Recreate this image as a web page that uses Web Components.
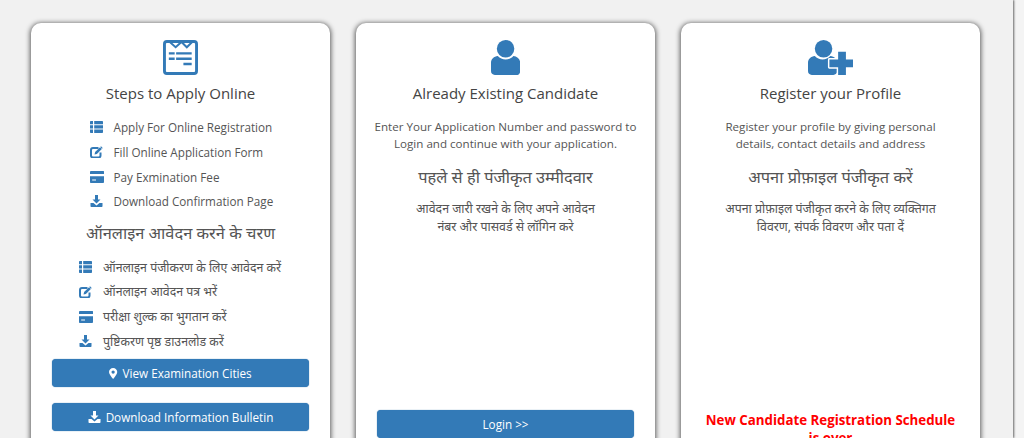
<!DOCTYPE html>
<html lang="en">
<head>
<meta charset="utf-8">
<title>Candidate Activity</title>
<style>
  html, body { margin: 0; height: 438px; overflow: hidden; background: #f4f4f4; }
  body { font-family: "Open Sans", "Noto Sans", sans-serif; color: #444; }
</style>
</head>
<body>
<page-shell>
  <info-card>
    <ui-icon slot="icon" name="form" size="35"></ui-icon>
    <card-title>Steps to Apply Online</card-title>
    <step-list indent="37.5">
      <step-item icon="list">Apply For Online Registration</step-item>
      <step-item icon="edit">Fill Online Application Form</step-item>
      <step-item icon="card">Pay Exmination Fee</step-item>
      <step-item icon="download">Download Confirmation Page</step-item>
    </step-list>
    <card-title hindi>ऑनलाइन आवेदन करने के चरण</card-title>
    <step-list indent="27" hindi>
      <step-item icon="list">ऑनलाइन पंजीकरण के लिए आवेदन करें</step-item>
      <step-item icon="edit">ऑनलाइन आवेदन पत्र भरें</step-item>
      <step-item icon="card">परीक्षा शुल्क का भुगतान करें</step-item>
      <step-item icon="download">पुष्टिकरण पृष्ठ डाउनलोड करें</step-item>
    </step-list>
    <action-button icon="pin">View Examination Cities</action-button>
    <action-button icon="download">Download Information Bulletin</action-button>
  </info-card>

  <info-card>
    <ui-icon slot="icon" name="user" size="35"></ui-icon>
    <card-title>Already Existing Candidate</card-title>
    <card-text height="46.5">Enter Your Application Number and password to Login and continue with your application.</card-text>
    <card-title hindi>पहले से ही पंजीकृत उम्मीदवार</card-title>
    <card-text hindi height="210">आवेदन जारी रखने के लिए अपने आवेदन<br>नंबर और पासवर्ड से लॉगिन करे</card-text>
    <action-button>Login &gt;&gt;</action-button>
  </info-card>

  <info-card>
    <ui-icon slot="icon" name="user-plus" size="35"></ui-icon>
    <card-title>Register your Profile</card-title>
    <card-text height="46.5">Register your profile by giving personal<br>details, contact details and address</card-text>
    <card-title hindi>अपना प्रोफ़ाइल पंजीकृत करें</card-title>
    <card-text hindi height="210">अपना प्रोफ़ाइल पंजीकृत करने के लिए व्यक्तिगत<br>विवरण, संपर्क विवरण और पता दें</card-text>
    <notice-text>New Candidate Registration Schedule is over</notice-text>
  </info-card>
</page-shell>

<script>
const USER_BODY = 'M7 16.500c2 2.500 5 3.500 8 3.500s6-1 8-3.500c4 .5 7 3 7 7V32c0 2.500-1.500 4-4 4H4c-2.500 0-4-1.500-4-4v-8.500c0-4 3-6.500 7-7z';

const ICONS = {
  form: { box: '0 0 36 36', body: `
    <rect x="1.500" y="1.500" width="33" height="33" rx="2.500" fill="none" stroke="currentColor" stroke-width="3"/>
    <path d="M7 2l6 5.500 6-5.500 5.500 5.500 5.500-5.500" fill="none" stroke="currentColor" stroke-width="2"/>
    <path d="M6 12.500h6v2.500H6zM13.500 12.500h16v2.500h-16zM6 18h6v2.500H6zM13.500 18h16v2.500h-16zM21 23.500h8.500V26H21z" fill="currentColor"/>` },
  user: { box: '0 0 30 36', body: `
    <circle cx="15" cy="9" r="9" fill="currentColor"/>
    <path d="${USER_BODY}" fill="currentColor"/>` },
  'user-plus': { box: '0 0 47 36', body: `
    <circle cx="16" cy="9" r="9" fill="currentColor"/>
    <path d="${USER_BODY}" fill="currentColor"/>
    <path d="M31 12h8v8h8v8h-8v8h-8v-8h-9v-8h9z" fill="currentColor" stroke="#fff" stroke-width="3" paint-order="stroke" stroke-linejoin="round"/>` },
  list: { box: '0 0 13 12', body: `
    <path d="M0 1c0-.6.4-1 1-1h2v3.300H0zM4.200 0H12c.6 0 1 .4 1 1v2.300H4.200zM0 4.300h3v3.300H0zM4.200 4.300H13v3.300H4.200zM0 8.600h3V12H1c-.6 0-1-.4-1-1zM4.200 8.600H13V11c0 .6-.4 1-1 1H4.200z" fill="currentColor"/>` },
  edit: { box: '0 0 13 12', body: `
    <path d="M8.500 2H3C1.800 2 1 2.800 1 4v5.500C1 10.700 1.800 11.500 3 11.500h5.500c1.200 0 2-.8 2-2V6.500" fill="none" stroke="currentColor" stroke-width="2"/>
    <path d="M4.500 8.500l.6-2.400L10 1.200l1.800 1.800-4.900 4.900z" fill="currentColor"/>
    <path d="M11 .3l1.700 1.700-.7.700L10.300 1z" fill="currentColor"/>` },
  card: { box: '0 0 13 11', body: `
    <path d="M1 0h11c.6 0 1 .4 1 1v1.800H0V1c0-.6.4-1 1-1zM0 4.800h13V10c0 .6-.4 1-1 1H1c-.6 0-1-.4-1-1zM2 7.800v1h3.500v-1z" fill="currentColor" fill-rule="evenodd"/>` },
  download: { box: '0 0 13 12', body: `
    <path d="M5 0h3v4.500h2.500L6.500 8.500 2.500 4.500H5z" fill="currentColor"/>
    <path d="M.5 8h3l3 2.500 3-2.500h3v3.200c0 .5-.3.800-.8.800H1.300c-.5 0-.8-.3-.8-.8z" fill="currentColor"/>` },
  pin: { box: '0 0 9 12', body: `
    <path d="M4.500 0C2 0 0 2 0 4.400 0 6.800 2.800 10 4.500 12 6.200 10 9 6.800 9 4.400 9 2 7 0 4.500 0zm0 6.200a1.800 1.800 0 1 1 0-3.600 1.800 1.800 0 0 1 0 3.600z" fill="currentColor" fill-rule="evenodd"/>` }
};

class UiIcon extends HTMLElement {
  connectedCallback() {
    const icon = ICONS[this.getAttribute('name')];
    const size = this.getAttribute('size') || 12;
    this.attachShadow({ mode: 'open' });
    this.shadowRoot.innerHTML = `
      <style>
        :host { display: inline-flex; }
        svg { height: ${size}px; display: block; }
      </style>
      <svg viewBox="${icon.box}">${icon.body}</svg>
    `;
  }
}

class PageShell extends HTMLElement {
  connectedCallback() {
    this.attachShadow({ mode: 'open' });
    this.shadowRoot.innerHTML = `
      <style>
        :host { display: block; height: 438px; width: 1013px; box-sizing: border-box; background: #f1f1f1; box-shadow: 1px 0 2px #666; overflow: clip; overflow-clip-margin: 3px; }
        .row { display: grid; grid-template-columns: repeat(3, 299px); column-gap: 26px; padding: 23px 0 0 31px; }
      </style>
      <div class="row"><slot></slot></div>
    `;
  }
}

class InfoCard extends HTMLElement {
  connectedCallback() {
    this.attachShadow({ mode: 'open' });
    this.shadowRoot.innerHTML = `
      <style>
        :host { display: block; background: #fff; border-radius: 10px; box-shadow: 0 1px 5px 1px #5c5c5c; padding: 17px 21px 20px; height: 520px; box-sizing: border-box; text-align: center; }
        .icon { display: flex; justify-content: center; height: 36px; color: #337ab7; }
      </style>
      <div class="icon"><slot name="icon"></slot></div>
      <slot></slot>
    `;
  }
}

class CardTitle extends HTMLElement {
  connectedCallback() {
    this.attachShadow({ mode: 'open' });
    this.shadowRoot.innerHTML = `
      <style>
        :host { display: block; font-size: 15px; line-height: 22px; color: #444; text-align: center; margin: 6px 0 11px; white-space: nowrap; }
        :host([hindi]) { font-size: 16.4px; margin: 0 0 7px; line-height: 24px; color: #555; }
      </style>
      <slot></slot>
    `;
  }
}

class CardText extends HTMLElement {
  connectedCallback() {
    this.attachShadow({ mode: 'open' });
    this.shadowRoot.innerHTML = `
      <style>
        :host { display: block; font-size: 11.6px; line-height: 17px; color: #555; text-align: center; margin: 14px -10px 0; height: ${this.getAttribute('height')}px; }
        :host([hindi]) { font-size: 12.35px; line-height: 18px; margin-top: 11px; }
      </style>
      <slot></slot>
    `;
  }
}

class StepList extends HTMLElement {
  connectedCallback() {
    this.attachShadow({ mode: 'open' });
    this.shadowRoot.innerHTML = `
      <style>
        :host { display: block; font-size: 11.7px; padding-left: ${this.getAttribute('indent')}px; margin-bottom: 7.2px; }
        :host([hindi]) { font-size: 12.35px; margin-top: 10px; margin-bottom: 5.5px; }
      </style>
      <slot></slot>
    `;
  }
}

class StepItem extends HTMLElement {
  connectedCallback() {
    this.attachShadow({ mode: 'open' });
    this.shadowRoot.innerHTML = `
      <style>
        :host { display: flex; align-items: center; height: 24.7px; color: #555; text-align: left; white-space: nowrap; }
        .ico { width: 24px; flex: none; color: #337ab7; display: flex; }
      </style>
      <span class="ico"><ui-icon name="${this.getAttribute('icon')}" size="12"></ui-icon></span>
      <slot></slot>
    `;
  }
}

class ActionButton extends HTMLElement {
  connectedCallback() {
    const icon = this.getAttribute('icon');
    const size = icon === 'pin' ? 11 : 12;
    this.attachShadow({ mode: 'open' });
    this.shadowRoot.innerHTML = `
      <style>
        :host { display: flex; align-items: center; justify-content: center; gap: 5px; height: 28px; margin-bottom: 16px; background: #337ab7; color: #fff; border-radius: 4px; font-size: 11.7px; box-shadow: 0 0 1px #2e6da4; }
      </style>
      ${icon ? `<ui-icon name="${icon}" size="${size}"></ui-icon>` : ''}
      <slot></slot>
    `;
  }
}

class NoticeText extends HTMLElement {
  connectedCallback() {
    this.attachShadow({ mode: 'open' });
    this.shadowRoot.innerHTML = `
      <style>
        :host { display: block; color: #f00; font-weight: 700; font-size: 13.3px; line-height: 18px; text-align: center; margin-top: 1px; }
      </style>
      <slot></slot>
    `;
  }
}

customElements.define('ui-icon', UiIcon);
customElements.define('page-shell', PageShell);
customElements.define('info-card', InfoCard);
customElements.define('card-title', CardTitle);
customElements.define('card-text', CardText);
customElements.define('step-list', StepList);
customElements.define('step-item', StepItem);
customElements.define('action-button', ActionButton);
customElements.define('notice-text', NoticeText);
</script>
</body>
</html>
